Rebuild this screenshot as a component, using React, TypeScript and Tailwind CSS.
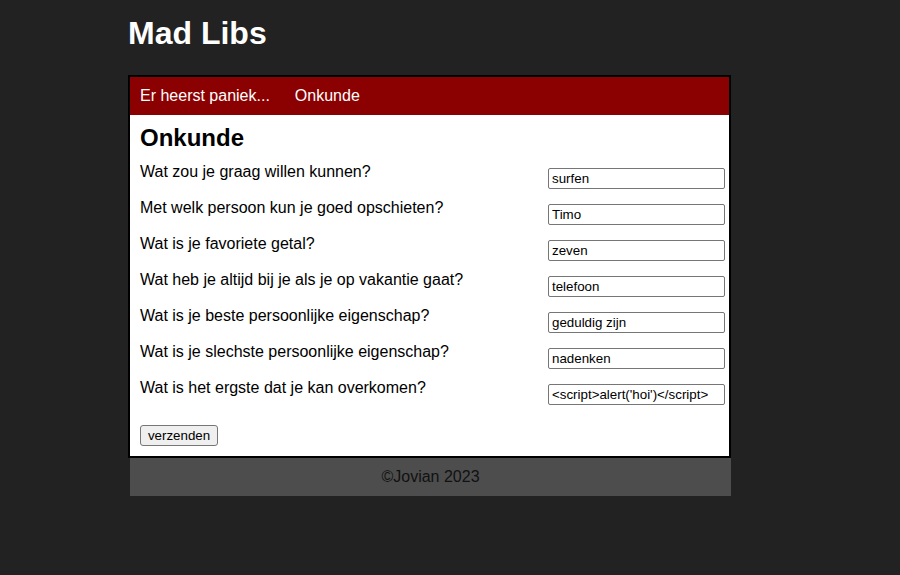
import React from "react";

const rows: [string, string][] = [
  ["Wat zou je graag willen kunnen?", "surfen"],
  ["Met welk persoon kun je goed opschieten?", "Timo"],
  ["Wat is je favoriete getal?", "zeven"],
  ["Wat heb je altijd bij je als je op vakantie gaat?", "telefoon"],
  ["Wat is je beste persoonlijke eigenschap?", "geduldig zijn"],
  ["Wat is je slechste persoonlijke eigenschap?", "nadenken"],
  ["Wat is het ergste dat je kan overkomen?", "<script>alert('hoi')</script>"],
];

export default function App() {
  return (
    <div
      className="min-h-[575px] w-full bg-[#222222] pl-[128px]"
      style={{ fontFamily: '"Liberation Sans", Arial, sans-serif' }}
    >
      <h1 className="pt-[15px] text-[32px] leading-[37px] font-bold text-white">Mad Libs</h1>
      <div className="mt-[23px] w-[603px] border-2 border-black bg-white">
        <nav className="flex h-[38px] items-center gap-[25px] bg-[#8b0000] px-[10px] text-[16px] leading-[18px] text-white">
          <span>Er heerst paniek...</span>
          <span>Onkunde</span>
        </nav>
        <div className="px-[10px] pt-[9px] pb-[9px] pr-[4px]">
          <h2 className="mb-[10px] text-[24px] leading-[28px] font-bold text-black">Onkunde</h2>
          {rows.map(([q, a]) => (
            <div key={q} className="flex h-[36px] items-start justify-between">
              <span className="pt-[1px] text-[16px] leading-[18px] text-black">{q}</span>
              <input
                readOnly
                value={a}
                className="mt-[6px] h-[21px] w-[177px] rounded-[2px] border border-[#767676] bg-white px-[3px] text-[13.33px] leading-[15px] text-black outline-none"
              />
            </div>
          ))}
          <button className="mt-[11px] h-[21px] w-[78px] rounded-[3px] border border-[#767676] bg-[#efefef] text-[13.33px] leading-[15px] text-black">
            verzenden
          </button>
        </div>
      </div>
      <footer className="ml-[2px] flex h-[38px] w-[601px] items-center justify-center bg-[#4d4d4d] text-[16px] leading-[18px] text-[#111111]">
        ©Jovian 2023
      </footer>
    </div>
  );
}
